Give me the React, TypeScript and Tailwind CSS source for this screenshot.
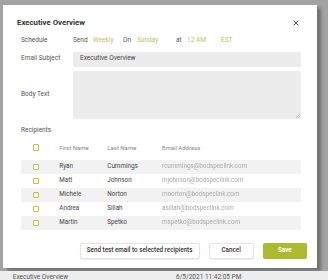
import { X } from 'lucide-react';

const recipients = [
  { first: 'Ryan', last: 'Cummings', email: 'rcummings@bodspeclink.com' },
  { first: 'Matt', last: 'Johnson', email: 'mjohnson@bodspeclink.com' },
  { first: 'Michele', last: 'Norton', email: 'mnorton@bodspeclink.com' },
  { first: 'Andrea', last: 'Sillah', email: 'asillah@bodspeclink.com' },
  { first: 'Martin', last: 'Spetko', email: 'mspetko@bodspeclink.com' },
];

function Checkbox() {
  return <span className="block w-[6.5px] h-[6.5px] border border-[#b7c54a] rounded-[1px] bg-white" />;
}

export default function App() {
  return (
    <div
      className="w-[328px] h-[280px] overflow-hidden bg-[#ececec] flex flex-col text-[#444]"
      style={{ fontFamily: 'Roboto, "Noto Sans", sans-serif' }}
    >
      {/* backdrop + modal */}
      <div className="h-[271px] shrink-0 bg-[#a2a2a2] pl-[3px] pt-[5px]">
        <div className="w-[314px] h-[263px] bg-white shadow-[4px_3px_3px_rgba(0,0,0,0.3)] flex flex-col pl-[14px] pr-[16px] pt-[13px]">
          {/* title */}
          <div className="h-[10px] flex items-center justify-between">
            <span className="text-[7.8px] font-bold text-[#333]">Executive Overview</span>
            <X className="w-[8px] h-[8px] text-[#333] mr-[1px]" strokeWidth={2.5} />
          </div>

          <div className="pl-[4px] flex flex-col">
            {/* schedule */}
            <div className="mt-[7.7px] h-[10px] flex items-center text-[6.5px]">
              <span className="w-[52px] text-[#555]">Schedule</span>
              <span className="w-[20px] text-[#555]">Send</span>
              <span className="w-[30px] text-[#b8c45a]">Weekly</span>
              <span className="w-[14px] text-[#555]">On</span>
              <span className="w-[39px] text-[#b8c45a]">Sunday</span>
              <span className="w-[11px] text-[#555]">at</span>
              <span className="w-[34px] text-[#b8c45a]">12 AM</span>
              <span className="text-[#b8c45a]">EST</span>
            </div>

            {/* email subject */}
            <div className="mt-[6.3px] flex items-center text-[6.5px]">
              <span className="w-[52px] text-[#555]">Email Subject</span>
              <div className="flex-1 h-[14.7px] bg-[#ececec] rounded-[1px] flex items-center pl-[7px] text-[#444]">
                Executive Overview
              </div>
            </div>

            {/* body text */}
            <div className="mt-[4.3px] flex items-center text-[6.5px]">
              <span className="w-[52px] text-[#555]">Body Text</span>
              <div className="flex-1 h-[47.7px] bg-[#ececec] rounded-[1px] relative">
                <svg className="absolute right-[1px] bottom-[1px]" width="4" height="4" viewBox="0 0 4 4">
                  <path d="M4 0 L0 4 M4 2 L2 4" stroke="#999" strokeWidth="0.6" />
                </svg>
              </div>
            </div>

            {/* recipients */}
            <div className="mt-[7.6px] h-[10px] flex items-center text-[6.5px] text-[#555]">Recipients</div>

            <div className="mt-[4.4px] h-[14px] flex items-center text-[6px] text-[#888]">
              <span className="w-[38.3px] pl-[11.7px]"><Checkbox /></span>
              <span className="w-[48px]">First Name</span>
              <span className="w-[54.7px]">Last Name</span>
              <span>Email Address</span>
            </div>

            <div className="mt-[5.3px] flex flex-col">
              {recipients.map((r, i) => (
                <div
                  key={r.email}
                  className={`h-[14px] flex items-center text-[6.3px] text-[#444] ${i % 2 === 0 ? 'bg-[#f2f2f2]' : ''}`}
                >
                  <span className="w-[38.3px] pl-[11.7px]"><Checkbox /></span>
                  <span className="w-[48px]">{r.first}</span>
                  <span className="w-[54.7px]">{r.last}</span>
                  <span className="text-[#aaa] blur-[0.5px]">{r.email}</span>
                </div>
              ))}
            </div>
          </div>

          {/* actions */}
          <div className="mt-[13.3px] flex justify-end gap-[9px] mr-[-6px] text-[6.3px] font-medium">
            <button className="w-[120px] h-[15.4px] bg-white border border-[#e4e4e4] rounded-[2px] shadow-[0_0.5px_1px_rgba(0,0,0,0.08)] text-[#333]">
              Send test email to selected recipients
            </button>
            <button className="w-[45px] h-[15.4px] bg-white border border-[#e4e4e4] rounded-[2px] shadow-[0_0.5px_1px_rgba(0,0,0,0.08)] text-[#333]">
              Cancel
            </button>
            <button className="w-[44.4px] h-[15.4px] bg-[#abba2f] rounded-[2px] text-white font-bold">
              Save
            </button>
          </div>
        </div>
      </div>

      {/* page beneath */}
      <div className="h-[9px] flex text-[6.5px] text-[#555] leading-[12px] bg-[#ededed]">
        <span className="w-[176px] pl-[12.7px]">Executive Overview</span>
        <span>6/5/2021 11:42:05 PM</span>
      </div>
    </div>
  );
}
